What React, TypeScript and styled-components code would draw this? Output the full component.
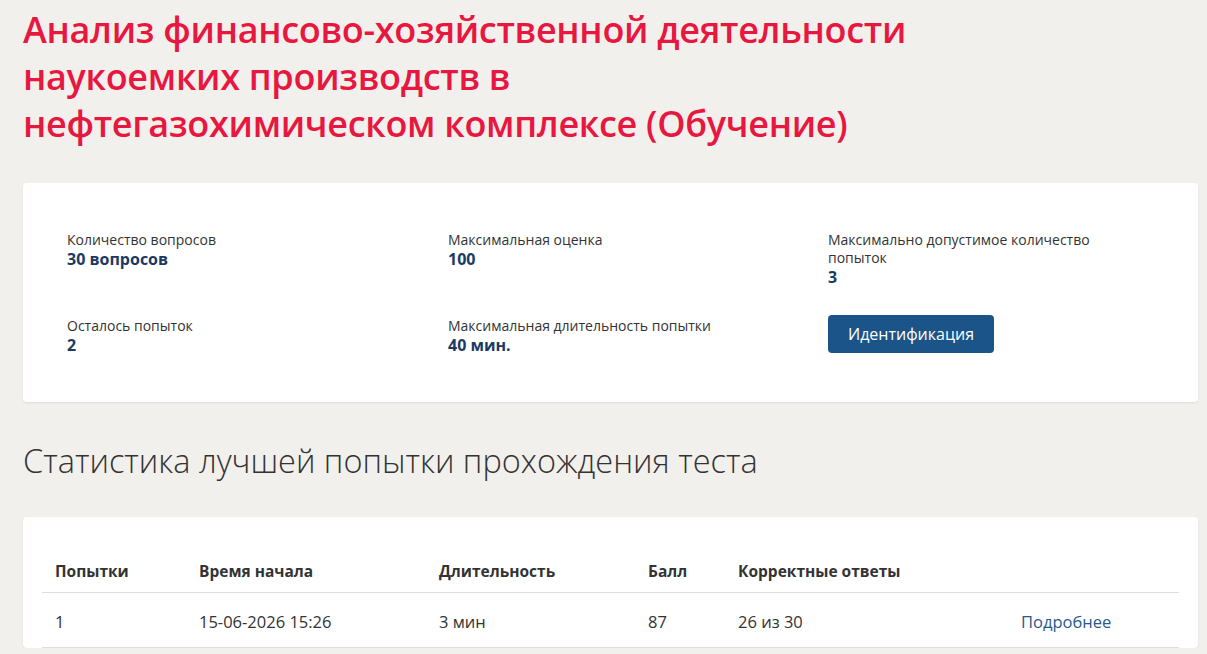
import React from "react";
import styled, { createGlobalStyle } from "styled-components";

const Global = createGlobalStyle`
  html, body { margin: 0; padding: 0; background: #f2f0ed; }
  body { font-family: "Open Sans", "Noto Sans", sans-serif; color: #333; }
  * { box-sizing: border-box; }
`;

const Page = styled.div`
  padding: 6px 9px 0 23px;
  display: flex;
  flex-direction: column;
`;

const Title = styled.h1`
  margin: 0 0 36px;
  font-family: "Open Sans", sans-serif;
  font-weight: 600;
  font-size: 36px;
  line-height: 47px;
  color: #e8173f;
  max-width: 900px;
  letter-spacing: -0.3px;
`;

const Card = styled.div<{ $pad: string }>`
  background: #fff;
  border-radius: 4px;
  box-shadow: 0 1px 2px rgba(0, 0, 0, 0.08);
  padding: ${(p) => p.$pad};
`;

const InfoGrid = styled.div`
  display: grid;
  grid-template-columns: 381px 380px 320px;
  row-gap: 30px;
`;

const Info = styled.div`
  display: flex;
  flex-direction: column;
`;

const Label = styled.div`
  font-size: 14px;
  line-height: 18px;
  color: #333;
  max-width: 300px;
`;

const Value = styled.div`
  font-size: 16px;
  line-height: 20px;
  font-weight: 700;
  color: #1b3a63;
`;

const Button = styled.button`
  align-self: flex-start;
  height: 38px;
  padding: 0 20px;
  border: none;
  border-radius: 4px;
  background: #1a5489;
  color: #fff;
  font-family: "Open Sans", sans-serif;
  font-size: 16px;
  margin-top: -2px;
`;

const SectionTitle = styled.h2`
  margin: 38px 0 35px;
  font-weight: 300;
  font-size: 32.5px;
  line-height: 42px;
  color: #333;
`;

const Table = styled.table`
  width: 100%;
  border-collapse: collapse;
  font-size: 16.5px;
`;

const Th = styled.th<{ $w?: number }>`
  text-align: left;
  font-weight: 700;
  font-size: 15.5px;
  padding: 10px 13px 10px;
  border-bottom: 1px solid #dedede;
  color: #333;
  width: ${(p) => (p.$w ? `${p.$w}px` : "auto")};
`;

const Td = styled.td`
  padding: 17px 13px 14px;
  border-bottom: 1px solid #dedede;
  color: #333;
`;

const Link = styled.a`
  color: #2a5a8a;
  text-decoration: none;
`;

export default function App() {
  return (
    <>
      <Global />
      <Page>
        <Title>
          Анализ финансово-хозяйственной деятельности наукоемких производств в
          нефтегазохимическом комплексе (Обучение)
        </Title>
        <Card $pad="48px 44px 47px">
          <InfoGrid>
            <Info>
              <Label>Количество вопросов</Label>
              <Value>30 вопросов</Value>
            </Info>
            <Info>
              <Label>Максимальная оценка</Label>
              <Value>100</Value>
            </Info>
            <Info>
              <Label>Максимально допустимое количество попыток</Label>
              <Value>3</Value>
            </Info>
            <Info>
              <Label>Осталось попыток</Label>
              <Value>2</Value>
            </Info>
            <Info>
              <Label>Максимальная длительность попытки</Label>
              <Value>40 мин.</Value>
            </Info>
            <Info>
              <Button>Идентификация</Button>
            </Info>
          </InfoGrid>
        </Card>
        <SectionTitle>Статистика лучшей попытки прохождения теста</SectionTitle>
        <Card $pad="33px 19px 0">
          <Table>
            <thead>
              <tr>
                <Th $w={144}>Попытки</Th>
                <Th $w={240}>Время начала</Th>
                <Th $w={209}>Длительность</Th>
                <Th $w={90}>Балл</Th>
                <Th $w={283}>Корректные ответы</Th>
                <Th></Th>
              </tr>
            </thead>
            <tbody>
              <tr>
                <Td>1</Td>
                <Td>15-06-2026 15:26</Td>
                <Td>3 мин</Td>
                <Td>87</Td>
                <Td>26 из 30</Td>
                <Td>
                  <Link href="#">Подробнее</Link>
                </Td>
              </tr>
            </tbody>
          </Table>
        </Card>
      </Page>
    </>
  );
}
